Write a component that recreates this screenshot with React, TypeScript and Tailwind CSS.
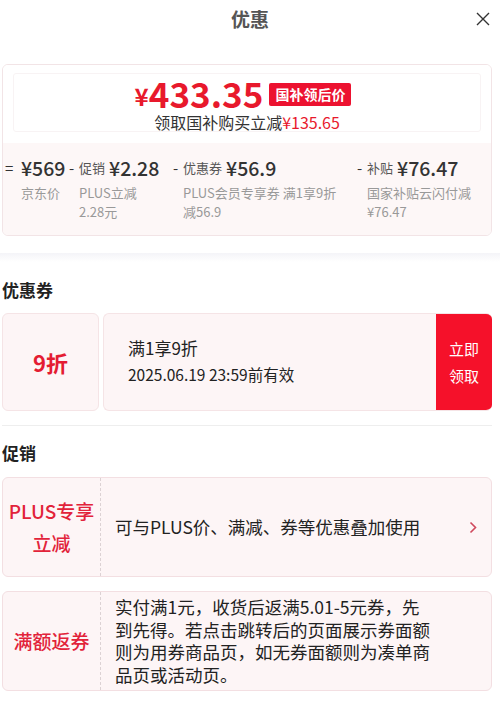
import React from "react";

const cols = [
  { sign: "=", label: "", amount: "¥569", sub: ["京东价"], w: "w-[66px]" },
  { sign: "-", label: "促销", amount: "¥2.28", sub: ["PLUS立减", "2.28元"], w: "w-[104px]" },
  { sign: "-", label: "优惠券", amount: "¥56.9", sub: ["PLUS会员专享券 满1享9折", "减56.9"], w: "w-[184px]" },
  { sign: "-", label: "补贴", amount: "¥76.47", sub: ["国家补贴云闪付减", "¥76.47"], w: "flex-1" },
];

function PriceCard() {
  return (
    <div className="ml-[2px] w-[490px] h-[172px] rounded-[6px] border border-[#f2e4e6] overflow-hidden">
      <div className="h-[78px] bg-white px-[10px] pt-[8px]">
        <div className="h-[59px] border border-[#f8f3f4] rounded-[3px] flex flex-col items-center">
          <div className="flex items-center h-[36px] mt-[2px] pr-[8px]">
            <span className="text-[#e8192c] font-bold text-[24px] leading-[24px] mt-[6px]">¥</span>
            <span className="text-[#e8192c] font-bold text-[35px] leading-[34px]">433.35</span>
            <span className="ml-[6px] mt-[3px] bg-[#ec1230] text-white font-bold text-[14px] leading-[23px] px-[6px] rounded-[2px]">
              国补领后价
            </span>
          </div>
          <div className="mt-[3px] text-[16px] leading-[18px] text-[#333]">
            领取国补购买立减<span className="text-[#e8192c]">¥135.65</span>
          </div>
        </div>
      </div>
      <div className="h-[94px] bg-[#fdf7f7] pt-[12px] flex">
        {cols.map((c, i) => (
          <div key={i} className={`${c.w} flex items-start ${i === 0 ? "pl-[2px]" : ""}`}>
            <span className={`h-[26px] flex items-center text-[#333] text-[15px] ${i === 0 ? "w-[16px]" : "w-[10px]"} shrink-0`}>
              {c.sign}
            </span>
            <div className="flex flex-col">
              <div className="h-[26px] flex items-center gap-[4px] whitespace-nowrap">
                {c.label && <span className="text-[13px] text-[#555]">{c.label}</span>}
                <span className="text-[19.5px] font-medium text-[#333] leading-none">{c.amount}</span>
              </div>
              <div className="mt-[2px] text-[13px] leading-[19px] text-[#999] whitespace-nowrap">
                {c.sub.map((s) => (
                  <div key={s}>{s}</div>
                ))}
              </div>
            </div>
          </div>
        ))}
      </div>
    </div>
  );
}

function Coupon() {
  return (
    <div className="ml-[2px] w-[490px] h-[98px] flex gap-[4px]">
      <div className="w-[97px] rounded-[6px] border border-[#f5e4e6] bg-[#fdf5f6] flex items-center justify-center">
        <span className="text-[#e41c33] font-bold text-[22px]">9折</span>
      </div>
      <div className="flex-1 flex rounded-[6px] border border-[#f5e4e6] border-r-0 bg-[#fdf5f6] overflow-hidden">
        <div className="flex-1 flex flex-col justify-center pl-[24px] pb-[2px]">
          <div className="text-[17px] leading-[24px] text-[#222]">满1享9折</div>
          <div className="text-[15.5px] leading-[24px] text-[#222] mt-[2px]">2025.06.19 23:59前有效</div>
        </div>
        <div className="w-[56px] bg-[#f5112a] flex items-center justify-center">
          <span className="text-white text-[15px] leading-[27px] text-center w-[32px]">立即领取</span>
        </div>
      </div>
    </div>
  );
}

function PromoCard({ tag, children }: { tag: React.ReactNode; children: React.ReactNode }) {
  return (
    <div className="ml-[2px] w-[490px] h-[100px] flex rounded-[6px] border border-[#f3dfe2] bg-[#fdf5f6]">
      <div className="w-[98px] shrink-0 flex items-center justify-center border-r border-dashed border-[#dcd2d4] text-[#e2233a] text-[19px] leading-[32px] text-center font-medium">
        {tag}
      </div>
      {children}
    </div>
  );
}

export default function App() {
  return (
    <div className="w-[500px] h-[721px] bg-white font-['Noto_Sans_CJK_SC',sans-serif] overflow-hidden">
      <div className="relative h-[38px] flex items-center justify-center">
        <span className="text-[19px] font-bold text-[#555]">优惠</span>
        <svg className="absolute right-[10px] top-[12px]" width="14" height="14" viewBox="0 0 14 14">
          <path d="M1 1L13 13M13 1L1 13" stroke="#333" strokeWidth="1.4" fill="none" />
        </svg>
      </div>

      <div className="mt-[26px]">
        <PriceCard />
      </div>

      <div className="mt-[17px] h-[9px] bg-gradient-to-b from-[#f4f4f8] to-white" />

      <div className="mt-[16px] ml-[2px] text-[17px] leading-[24px] font-bold text-[#222]">优惠券</div>
      <div className="mt-[11px]">
        <Coupon />
      </div>

      <div className="mt-[14px] ml-[2px] w-[490px] border-t border-[#eeeeee]" />

      <div className="mt-[15px] ml-[2px] text-[17px] leading-[24px] font-bold text-[#222]">促销</div>

      <div className="mt-[12px]">
        <PromoCard
          tag={
            <span>
              PLUS专享
              <br />
              立减
            </span>
          }
        >
          <div className="flex-1 flex items-center pl-[14px] pr-[14px]">
            <span className="flex-1 text-[17.5px] text-[#222]">可与PLUS价、满减、券等优惠叠加使用</span>
            <svg width="8" height="13" viewBox="0 0 8 13">
              <path d="M1.5 1.5L6.5 6.5L1.5 11.5" stroke="#d0485c" strokeWidth="1.6" fill="none" />
            </svg>
          </div>
        </PromoCard>
      </div>

      <div className="mt-[14px]">
        <PromoCard tag="满额返券">
          <div className="flex items-center pl-[14px]">
            <p className="w-[318px] text-[17.5px] leading-[22.5px] text-[#222]">
              实付满1元，收货后返满5.01-5元券，先到先得。若点击跳转后的页面展示券面额则为用券商品页，如无券面额则为凑单商品页或活动页。
            </p>
          </div>
        </PromoCard>
      </div>
    </div>
  );
}
